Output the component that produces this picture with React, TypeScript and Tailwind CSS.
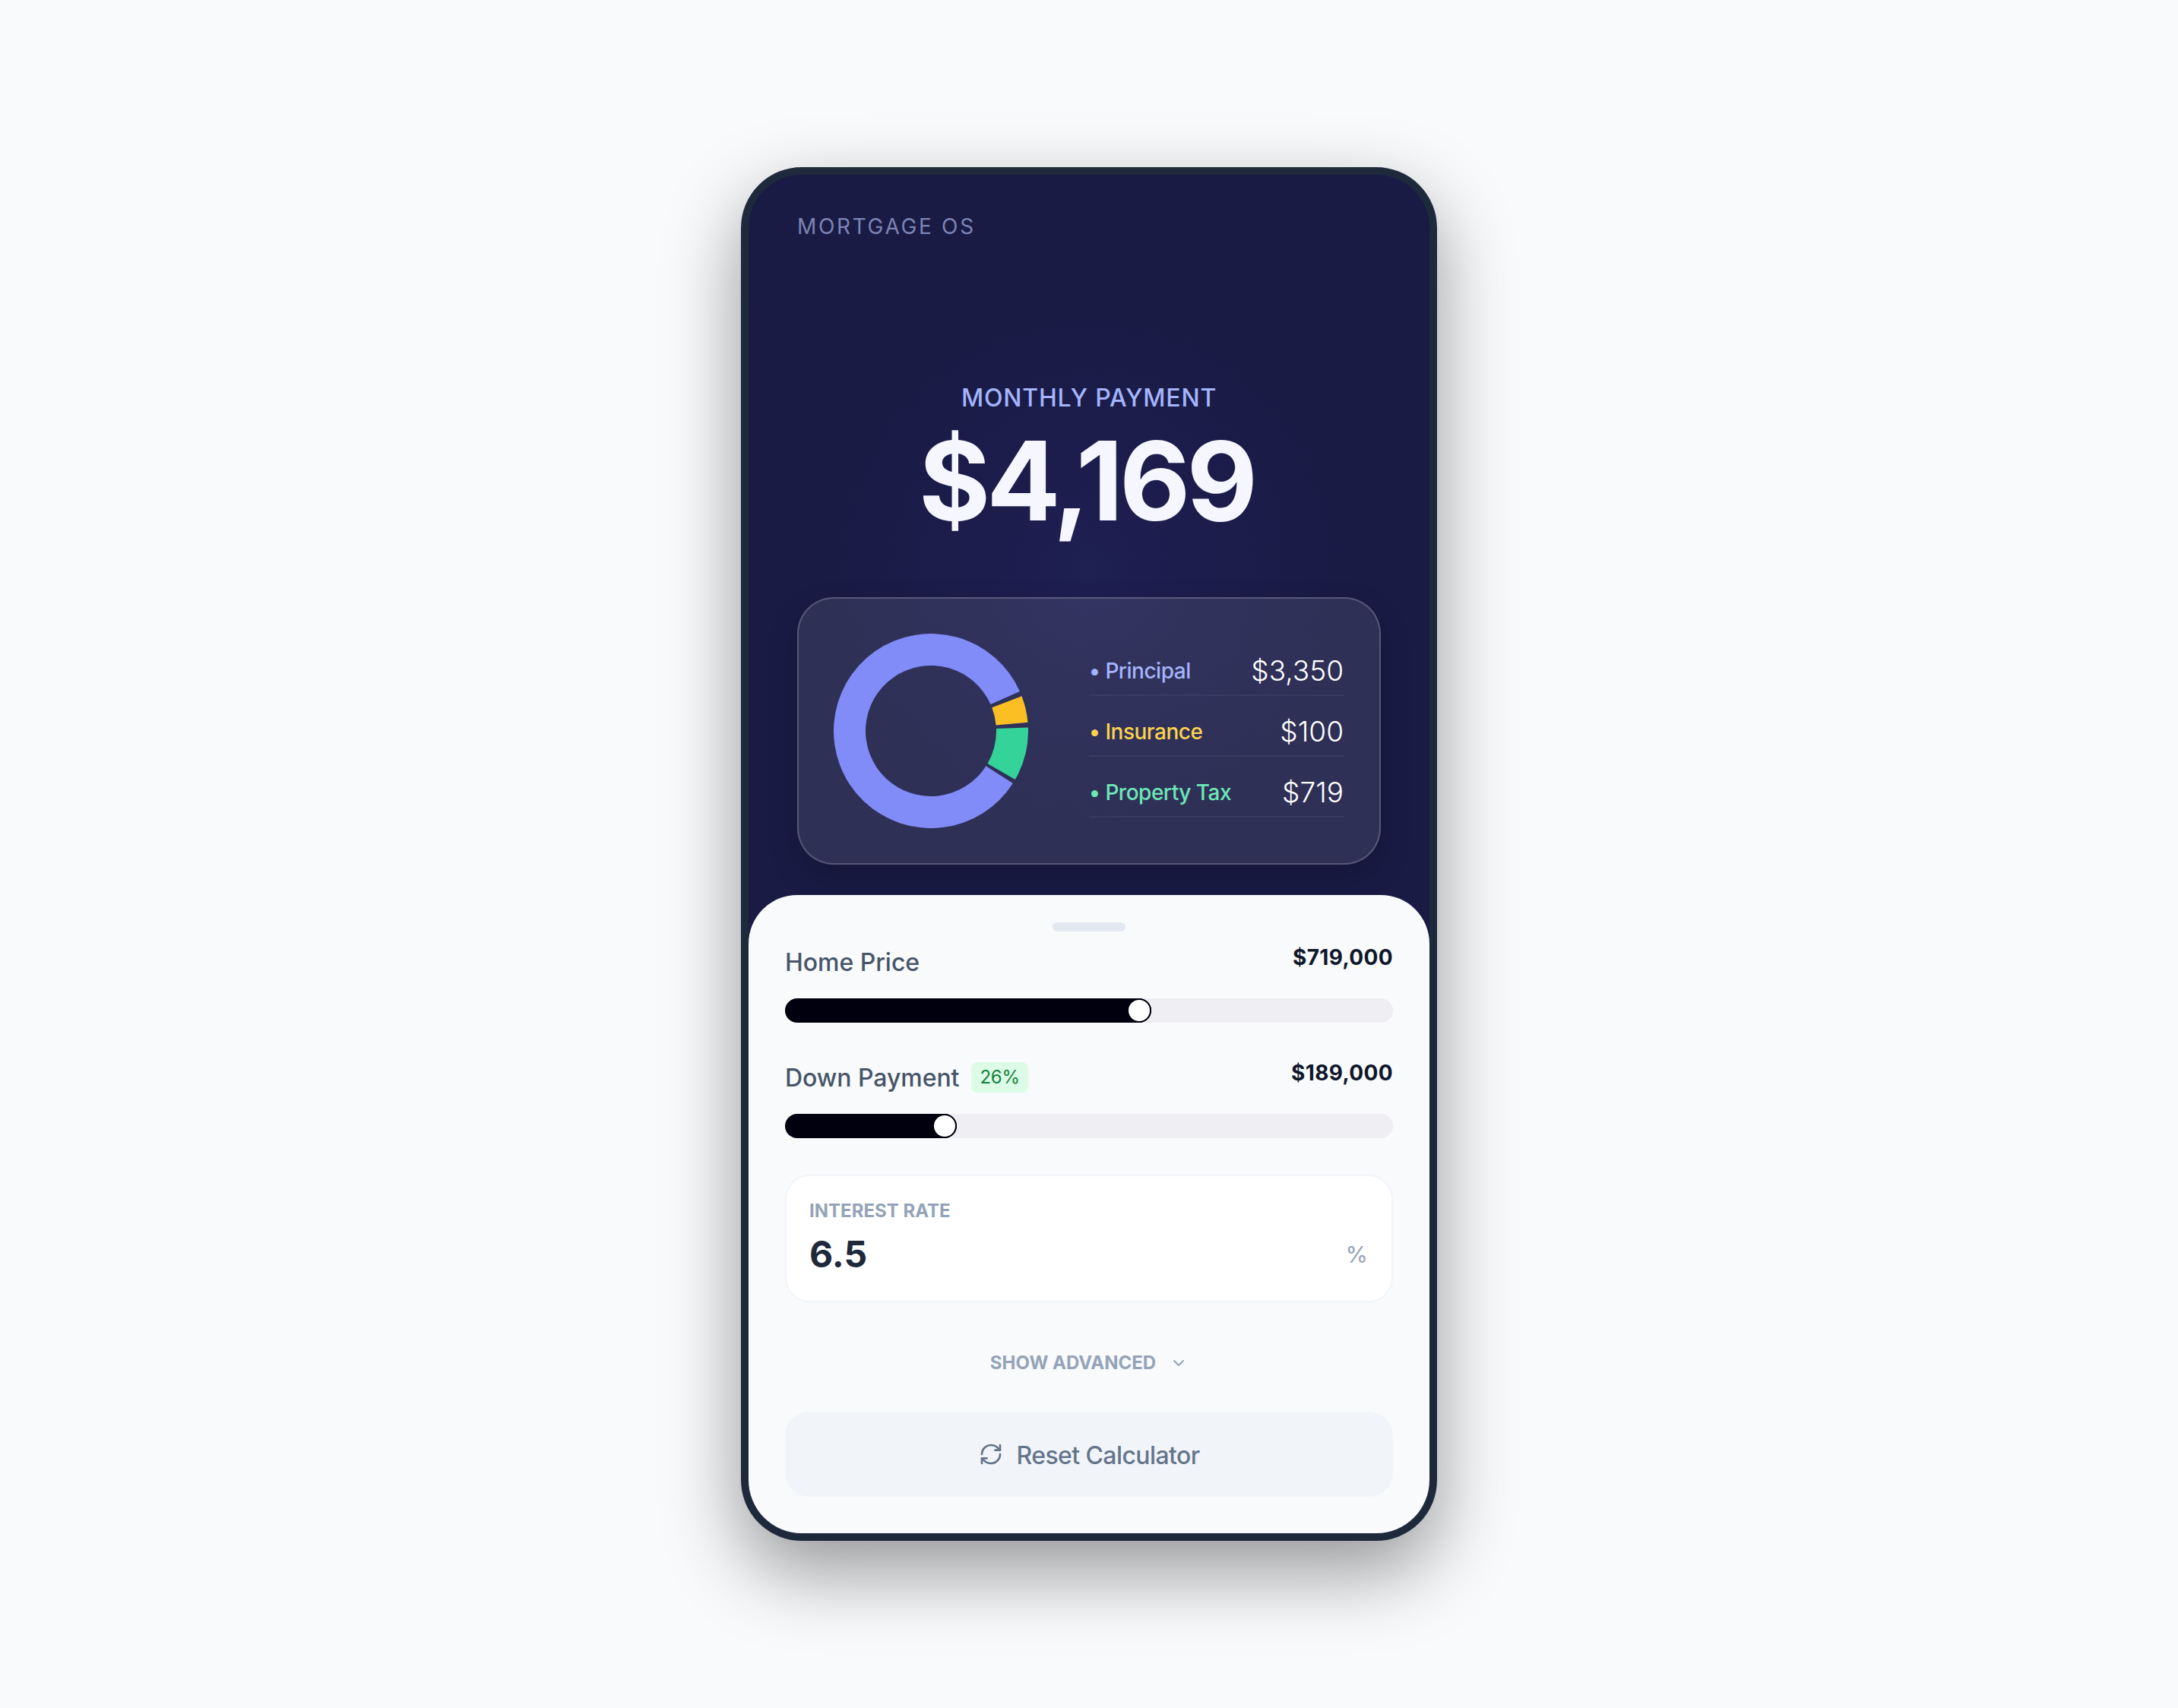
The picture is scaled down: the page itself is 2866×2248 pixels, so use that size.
import { ChevronDown, RefreshCw } from 'lucide-react';

/* Donut segment between two angles, measured counter-clockwise from 3 o'clock */
function arc(from: number, to: number, r1 = 128, r0 = 86) {
  const pt = (r: number, a: number) => {
    const t = (a * Math.PI) / 180;
    return `${(128 + r * Math.cos(t)).toFixed(2)} ${(128 - r * Math.sin(t)).toFixed(2)}`;
  };
  const large = Math.abs(to - from) > 180 ? 1 : 0;
  return `M${pt(r1, from)}A${r1} ${r1} 0 ${large} 0 ${pt(r1, to)}L${pt(r0, to)}A${r0} ${r0} 0 ${large} 1 ${pt(r0, from)}Z`;
}

function Donut() {
  return (
    <svg viewBox="0 0 256 256" className="w-[256px] h-[256px] shrink-0">
      <path d={arc(24, 327.4)} fill="#818cf8" />
      <path d={arc(5, 21)} fill="#fbbf24" />
      <path d={arc(-30, 2)} fill="#34d399" />
    </svg>
  );
}

function LegendRow({ label, value, color }: { label: string; value: string; color: string }) {
  return (
    <div className="flex items-center justify-between h-[68px] pt-[3px] border-b-2 border-white/5">
      <span className={`text-[28px] font-medium tracking-[-0.5px] ${color}`}>• {label}</span>
      <span className="mr-[1px] text-[37px] font-light text-white">{value}</span>
    </div>
  );
}

function SliderRow({
  label,
  value,
  badge,
  fill,
}: {
  label: string;
  value: string;
  badge?: string;
  fill: string;
}) {
  return (
    <div>
      <div className="flex items-start justify-between">
        <div className="flex items-center gap-[16px] h-[52px]">
          <span className="pt-[2px] text-[32px] font-medium tracking-[-0.05px] text-[#475569]">{label}</span>
          {badge && (
            <span className="flex items-center h-[40px] px-[11px] rounded-[8px] bg-[#dcfce7] text-[24px] tracking-[-0.2px] text-[#15803d]">
              {badge}
            </span>
          )}
        </div>
        <span className="text-[28px] font-bold leading-[40px] tracking-[0.35px] text-[#0f172a]">{value}</span>
      </div>
      <div className="mt-[22px] h-[32px] rounded-full bg-[#efeef2]">
        <div className={`flex justify-end h-[32px] rounded-full bg-[#00000f] ${fill}`}>
          <div className="w-[32px] h-[32px] rounded-full bg-white border-2 border-[#00000f]" />
        </div>
      </div>
    </div>
  );
}

export default function App() {
  return (
    <div className="flex items-center justify-center min-h-screen bg-[#f8fafc] font-['Inter',sans-serif]">
      <div className="flex flex-col w-[916px] h-[1808px] rounded-[80px] border-[10px] border-[#1e293b] overflow-hidden shadow-[0_40px_100px_rgba(0,0,0,0.4)] bg-[radial-gradient(circle_340px_at_50%_29%,#1f2053_0%,#1c1d4c_40%,#191b45_100%)]">
        {/* Dark header */}
        <div className="px-[64px] pt-[48px]">
          <p className="text-[28px] leading-[40px] tracking-[0.095em] text-[#7c84b4]">MORTGAGE OS</p>
          <p className="mt-[182px] text-center text-[32px] leading-[48px] font-medium tracking-[0.025em] text-[#a5b4fc]">
            MONTHLY PAYMENT
          </p>
          <p className="mt-[13px] pr-[7px] text-center text-[144px] leading-[144px] font-bold tracking-[-0.035em] text-[#f5f6ff]">
            $4,169
          </p>

          <div className="flex items-center gap-[80px] mt-[81px] h-[352px] px-[46px] rounded-[48px] border-2 border-white/20 bg-white/[0.095] shadow-[0_16px_40px_rgba(0,0,0,0.18)]">
            <Donut />
            <div className="flex flex-col flex-1 gap-[12px]">
              <LegendRow label="Principal" value="$3,350" color="text-[#a5b4fc]" />
              <LegendRow label="Insurance" value="$100" color="text-[#fcd34d]" />
              <LegendRow label="Property Tax" value="$719" color="text-[#6ee7b7]" />
            </div>
          </div>
        </div>

        {/* Bottom sheet */}
        <div className="flex-1 mt-[40px] px-[48px] pt-[36px] rounded-t-[64px] bg-[#f8fafc]">
          <div className="w-[96px] h-[12px] mx-auto mb-[14px] rounded-full bg-[#e2e8f0]" />

          <SliderRow label="Home Price" value="$719,000" fill="w-[482px]" />
          <div className="mt-[46px]">
            <SliderRow label="Down Payment" value="$189,000" badge="26%" fill="w-[226px]" />
          </div>

          <div className="mt-[48px] h-[168px] px-[30px] pt-[30px] rounded-[32px] border-2 border-[#f1f5f9] bg-white">
            <p className="text-[24px] leading-[32px] font-bold text-[#94a3b8]">INTEREST RATE</p>
            <div className="flex items-center justify-between mt-[5px]">
              <span className="text-[48px] leading-[72px] font-bold text-[#1e293b]">6.5</span>
              <span className="text-[30px] text-[#94a3b8] mr-[1px]">%</span>
            </div>
          </div>

          <div className="flex items-center justify-center gap-[18px] mt-[60px] h-[40px]">
            <span className="text-[24px] font-bold text-[#94a3b8]">SHOW ADVANCED</span>
            <ChevronDown size={24} className="text-[#94a3b8]" />
          </div>

          <button className="flex items-center justify-center gap-[18px] mt-[44px] w-full h-[112px] rounded-[32px] bg-[#f1f5f9] text-[32px] font-medium tracking-[-0.6px] text-[#64748b]">
            <RefreshCw size={32} />
            <span className="pt-[3px]">Reset Calculator</span>
          </button>
        </div>
      </div>
    </div>
  );
}
